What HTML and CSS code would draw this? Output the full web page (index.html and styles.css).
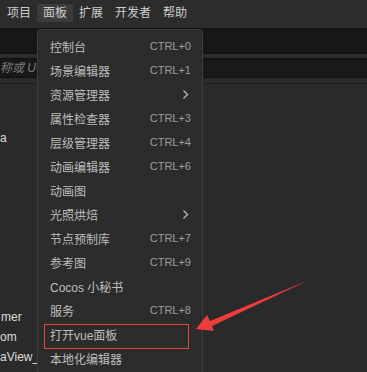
FILE: index.html
```html
<!DOCTYPE html>
<html lang="zh">
<head>
<meta charset="utf-8">
<link rel="stylesheet" href="styles.css">
</head>
<body>
<div class="app">
  <nav class="menubar">
    <span class="mb-item">项目</span>
    <span class="mb-item active">面板</span>
    <span class="mb-item">扩展</span>
    <span class="mb-item">开发者</span>
    <span class="mb-item">帮助</span>
  </nav>
  <div class="toolbar"></div>
  <div class="searchbar"><span class="placeholder">称或 UUID</span></div>
  <div class="tree">
    <div class="node n-a">a</div>
    <div class="node n-mer">mer</div>
    <div class="node">om</div>
    <div class="node n-view">aView_</div>
  </div>

  <div class="menu">
    <div class="mi"><span>控制台</span><span class="sc">CTRL+0</span></div>
    <div class="mi"><span>场景编辑器</span><span class="sc">CTRL+1</span></div>
    <div class="mi"><span>资源管理器</span><svg class="chev" width="7" height="11" viewBox="0 0 7 11"><path d="M1.5 1.5 L5.5 5.5 L1.5 9.5" fill="none" stroke="#b4b4b4" stroke-width="1.4"/></svg></div>
    <div class="mi"><span>属性检查器</span><span class="sc">CTRL+3</span></div>
    <div class="mi"><span>层级管理器</span><span class="sc">CTRL+4</span></div>
    <div class="mi"><span>动画编辑器</span><span class="sc">CTRL+6</span></div>
    <div class="mi"><span>动画图</span></div>
    <div class="mi"><span>光照烘焙</span><svg class="chev" width="7" height="11" viewBox="0 0 7 11"><path d="M1.5 1.5 L5.5 5.5 L1.5 9.5" fill="none" stroke="#b4b4b4" stroke-width="1.4"/></svg></div>
    <div class="mi"><span>节点预制库</span><span class="sc">CTRL+7</span></div>
    <div class="mi"><span>参考图</span><span class="sc">CTRL+9</span></div>
    <div class="mi"><span>Cocos 小秘书</span></div>
    <div class="mi"><span>服务</span><span class="sc">CTRL+8</span></div>
    <div class="mi marked"><span>打开vue面板</span></div>
    <div class="mi"><span>本地化编辑器</span></div>
  </div>

  <svg class="arrow" width="367" height="372" viewBox="0 0 367 372">
    <polygon points="309,280 210,321 207,315 196,329 214,331 212,326" fill="#ef3b3b"/>
  </svg>
</div>
</body>
</html>
```
FILE: styles.css
```css
* { box-sizing: border-box; }
html, body { margin: 0; padding: 0; }
body {
  width: 367px;
  height: 372px;
  overflow: hidden;
  background: #2a2a2a;
  font-family: "Liberation Sans", "Noto Sans CJK SC", sans-serif;
  font-size: 12px;
}
.app {
  position: relative;
  width: 367px;
  height: 372px;
  overflow: hidden;
  background: #2a2a2a;
}
.menubar {
  height: 28px;
  display: flex;
  align-items: flex-start;
  padding: 4px 0 0 1px;
  background: #2c2c2c;
}
.mb-item {
  height: 18px;
  line-height: 18px;
  padding: 0 6px;
  color: #cdcdcd;
  border-radius: 2px;
}
.mb-item.active { background: #3c3c3c; }
.toolbar {
  height: 26px;
  background: #171717;
  border-top: 1px solid #111;
  border-bottom: 1px solid #111;
}
.searchbar {
  height: 24px;
  background: #2d2d2d;
  padding: 4px 0 0 0;
}
.searchbar .placeholder {
  display: block;
  height: 20px;
  line-height: 18px;
  background: #191919;
  border-top: 1px solid #0f0f0f;
  border-bottom: 1px solid #0f0f0f;
  color: #7c7c7c;
  font-style: italic;
  white-space: nowrap;
  padding-left: 0;
}
.tree {
  border-top: 1px solid #1c1c1c;
  margin-top: 5px;
  display: flex;
  flex-direction: column;
}
.node {
  height: 20px;
  line-height: 20px;
  color: #dcdcdc;
  white-space: nowrap;
}
.n-a { margin-top: 44px; }
.n-mer { margin-top: 159px; margin-left: 1px; }

.menu {
  position: absolute;
  left: 37px;
  top: 29px;
  width: 166px;
  height: 360px;
  background: #2c2c2c;
  border: 1px solid #3e3e3e;
  border-radius: 4px 4px 0 0;
  padding-top: 4px;
  display: flex;
  flex-direction: column;
}
.mi {
  position: relative;
  height: 24px;
  display: flex;
  align-items: center;
  justify-content: space-between;
  padding: 0 11px 0 12px;
  color: #bdbdbd;
  white-space: nowrap;
}
.mi .sc {
  color: #9d9d9d;
  font-size: 11px;
}
.mi .chev { margin-right: 2px; }
.mi.marked::after {
  content: "";
  position: absolute;
  left: 6px;
  right: 13px;
  top: 2px;
  height: 23px;
  border: 1px solid #e8413e;
}
.arrow {
  position: absolute;
  left: 0;
  top: 0;
  pointer-events: none;
}
```
